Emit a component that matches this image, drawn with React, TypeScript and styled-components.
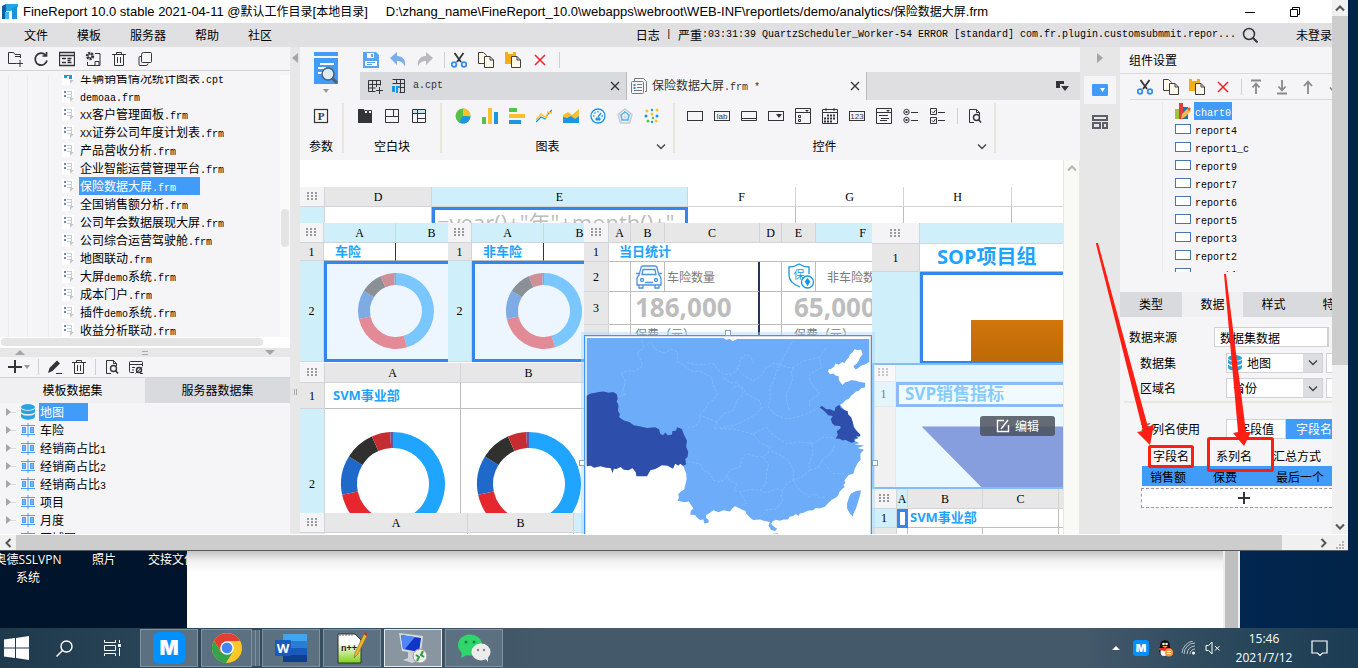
import React from 'react';
import styled, { createGlobalStyle, css } from 'styled-components';

const CJK = '"Noto Sans CJK SC", "Noto Sans", sans-serif';
const BLUE = '#419bf9';
const INK = '#333438';

const GlobalStyle = createGlobalStyle`
  * { box-sizing: border-box; }
  body { margin: 0; background: #001a3c; font: 12px/18px ${CJK}; color: #000; }
  button, input, select { font: inherit; color: inherit; }
  ul { list-style: none; margin: 0; padding: 0; }
  h1, h2, p { margin: 0; font: inherit; }
  svg { display: block; flex: none; }
`;

/* ---------- text ---------- */

const Ascii = styled.span<{ $ui?: boolean }>`
  font-family: ${p => (p.$ui ? '"Liberation Sans", sans-serif' : '"Liberation Mono", monospace')};
  font-size: ${p => (p.$ui ? 13 : 10)}px;
  font-weight: ${p => (p.$ui ? 400 : 500)};
  white-space: pre;
`;

const Mixed = ({ text, ui }: { text: string; ui?: boolean }) => (
  <>
    {text.split(/([\x20-\x7e]+)/).filter(Boolean).map((part, i) =>
      /^[\x20-\x7e]/.test(part) ? <Ascii key={i} $ui={ui}>{part}</Ascii> : part
    )}
  </>
);

/* ---------- page shell ---------- */

const Desktop = styled.div`
  display: flex;
  flex-direction: column;
  min-height: 100vh;
  min-width: 1200px;
  overflow: hidden;
  background: linear-gradient(90deg, #00142b 0, #001833 60%, #01264f 92%, #012447 100%);
`;

const RemoteWindow = styled.main`
  position: relative;
  flex: 1;
  display: grid;
  grid-template-columns: minmax(0, 1fr) 16px;
  grid-template-rows: minmax(0, 1fr) 16px;
  margin-right: 10px;
  background: #f0f0f0;
  border-bottom: 1px solid #565a5e;
  z-index: 1;
`;

const Designer = styled.div`
  display: flex;
  flex-direction: column;
  height: calc(100vh - 134px);
  min-height: 534px;
  min-width: 0;
  overflow: hidden;
  background: #f5f5f7;
`;

const ScrollColumn = styled.div`
  display: flex;
  flex-direction: column;
  background: #f0f0f0;
`;

const ScrollRow = styled.div`
  grid-column: 1 / 3;
  display: flex;
  background: #f0f0f0;
  border-top: 1px solid #fff;
`;

const ScrollEnd = styled.button`
  display: grid;
  place-items: center;
  flex: none;
  width: 16px;
  height: 16px;
  padding: 0;
  border: 0;
  background: none;
`;

const Thumb = styled.div<{ $grow: number }>`
  flex: ${p => p.$grow} 0 0;
  background: #cdcdcd;
`;

const Rest = styled.div<{ $grow: number }>`
  flex: ${p => p.$grow} 0 0;
`;

const TitleBar = styled.header`
  display: flex;
  align-items: center;
  gap: 5px;
  height: 23px;
  flex: none;
  padding-left: 1px;
  background: #fff;
  white-space: pre;
`;

const Title = styled.h1`
  display: flex;
  gap: 18px;
`;

const WindowButtons = styled.div`
  display: flex;
  gap: 29px;
  margin-left: auto;
  padding-right: 29px;
`;

const MenuBar = styled.nav`
  display: flex;
  align-items: center;
  flex: none;
  height: 24px;
  padding-left: 24px;
  background: #e0e0e2;
`;

const MenuItem = styled.button`
  padding: 0;
  margin-right: 29px;
  border: 0;
  background: none;
`;

const LogLine = styled.div`
  display: flex;
  align-items: center;
  margin-left: auto;
  white-space: nowrap;
`;

const Login = styled.button`
  padding: 0;
  margin-left: 38px;
  border: 0;
  background: none;
`;

const Workspace = styled.div`
  display: flex;
  flex: 1;
  min-height: 0;
`;

/* ---------- shared controls ---------- */

const IconButton = styled.button`
  display: grid;
  place-items: center;
  flex: none;
  width: 16px;
  height: 16px;
  padding: 0;
  border: 0;
  background: none;
`;

const Toolbar = styled.div<{ $h: number; $gap: number; $pad: number }>`
  display: flex;
  align-items: center;
  flex: none;
  height: ${p => p.$h}px;
  gap: ${p => p.$gap}px;
  padding-left: ${p => p.$pad}px;
`;

const Divider = styled.span`
  flex: none;
  width: 1px;
  height: 16px;
  background: #d0d0d4;
`;

type IconProps = { children: React.ReactNode; size?: number; w?: number; stroke?: string };
const Icon = ({ children, size = 16, w = 16, stroke = INK }: IconProps) => (
  <svg width={w} height={size} viewBox={`0 0 ${w} ${size}`} fill="none" stroke={stroke} strokeWidth="1">
    {children}
  </svg>
);

const Tool = ({ label, children }: { label: string; children: React.ReactNode }) => (
  <IconButton type="button" aria-label={label}><Icon>{children}</Icon></IconButton>
);

const cutArt = (
  <g>
    <path d="M3.500 1 10 10M12.500 1 6 10" stroke={INK} strokeWidth="1.800" />
    <circle cx="3" cy="12.500" r="2.300" stroke="#2f8df5" strokeWidth="1.800" />
    <circle cx="13" cy="12.500" r="2.300" stroke="#2f8df5" strokeWidth="1.800" />
  </g>
);
const copyArt = (
  <g fill="#fff9ea" stroke="#3f3f42">
    <path d="M.5.5h5l3 3v8h-8z" />
    <path d="M6.500 4.500h5.500l3.500 3.500v7.500h-9zM12 4.500v3.500h3.500" />
  </g>
);
const pasteArt = (
  <g>
    <path d="M0 0h11v12H0z" fill="#f2ae17" stroke="none" />
    <path d="M3 0h5v2H3z" fill="#fff3d0" stroke="none" />
    <path d="M6.500 4.500h5.500l3.500 3.500v7.500h-9zM12 4.500v3.500h3.500" fill="#fff9ea" stroke="#3f3f42" />
  </g>
);
const removeArt = <path d="M3 3l10 10M13 3 3 13" stroke="#e8232b" strokeWidth="1.500" />;
const trashArt = <path d="M1 3.500h14M5.500 3.500v-2h5v2M3.500 3.500v11h9v-11M6.500 6v6M9.500 6v6" />;
const pageFindArt = (
  <g>
    <path d="M7 14.500H2.500v-13h7l3 3V7M9.500 1.500v3h3" />
    <circle cx="9.500" cy="9.500" r="3" strokeWidth="1.400" />
    <path d="M11.500 11.500 14 14.500" strokeWidth="1.600" />
  </g>
);
const chevronArt = <path d="M1 1.500 5 5.500 9 1.500" stroke="#444" strokeWidth="1.400" />;
const databaseArt = (
  <g fill="#2ca3e0" stroke="none">
    <ellipse cx="8" cy="3" rx="7" ry="3" />
    <path d="M1 4.500c2 3 12 3 14 0v3.500c-2 3-12 3-14 0zM1 9.500c2 3 12 3 14 0v3.500c-2 3.500-12 3.500-14 0z" />
  </g>
);

/* ---------- left panel ---------- */

const LeftPanel = styled.aside`
  display: flex;
  flex-direction: column;
  flex: none;
  width: 290px;
`;

const Gutter = styled.div`
  display: flex;
  flex-direction: column;
  justify-content: space-between;
  align-items: center;
  flex: none;
  width: 10px;
  padding: 6px 0 139px;
  background: #e7e7e8;
`;

const GripBars = styled.span`
  width: 3px;
  height: 6px;
  border: solid #aaa;
  border-width: 0 1px;
`;

const TreeArea = styled.div`
  display: flex;
  flex: 262 0 0;
  min-height: 0;
  margin-top: 4px;
`;

const TreeClip = styled.div`
  flex: 1;
  overflow: hidden;
  background:
    linear-gradient(#ececee, #ececee) 8px 0 / 1px 100% no-repeat,
    linear-gradient(#ececee, #ececee) 27px 0 / 1px 100% no-repeat,
    linear-gradient(#ececee, #ececee) 48px 0 / 1px 100% no-repeat;
`;

const FileTree = styled.ul`
  margin-top: -6px;
`;

const FileRow = styled.li`
  display: flex;
  align-items: center;
  height: 18px;
  padding-left: 62px;
  gap: 5px;
  white-space: nowrap;
`;

const Label = styled.span<{ $on?: boolean; $w?: number }>`
  height: 18px;
  padding: 0 1px;
  min-width: ${p => (p.$w ? p.$w + 'px' : 'auto')};
  ${p => p.$on && css`background: ${BLUE}; color: #fff;`}
`;

const SideScroll = styled.div`
  display: flex;
  flex-direction: column;
  width: 10px;
  padding: 0 1px;
  background: #fafafa;
`;

const SoftThumb = styled.div<{ $grow: number }>`
  flex: ${p => p.$grow} 0 0;
  border-radius: 4px;
  background: #e4e4e5;
`;

const BottomScroll = styled.div`
  display: flex;
  flex: none;
  height: 11px;
  padding: 1px 1px 2px;
  background: #fff;
`;

const Splitter = styled.div`
  display: flex;
  align-items: center;
  justify-content: space-between;
  flex: none;
  height: 9px;
  padding: 0 15px;
  background: #e7e7e8;
`;

const Tabs = styled.div`
  display: flex;
  flex: none;
  height: 25px;
`;

const Tab = styled.button<{ $on?: boolean; $w?: number }>`
  flex: ${p => (p.$w ? `0 0 ${p.$w}px` : '1')};
  padding: 0 0 1px;
  border: 0;
  overflow: hidden;
  background: ${p => (p.$on ? '#f0f0f2' : '#d9dadd')};
`;

const DataTree = styled.ul`
  flex: 131 0 0;
  min-height: 0;
  overflow: hidden;
`;

const DataRow = styled.li`
  display: flex;
  align-items: center;
  height: 18px;
  padding-left: 6px;
  & > ${Label} { margin-left: 3px; }
`;

const FileGlyph = ({ cpt }: { cpt?: boolean }) => (
  <Icon w={12} size={14} stroke="none">
    <path d="M0 0h12v9l-5 5H0z" fill="#fff" />
    <path d="M12 9 8 13V9z" fill="#c8c8cb" />
    {cpt
      ? <path d="M2 2h3v5H2zM6 2h4v6H7V5H5V4h1z" fill="#1b9be3" />
      : <><path d="M2 2h2v2H2zM2 6h2v2H2z" fill="#7287ad" /><path d="M5 2.500h5M5 5.500h5M5 8.500h4M9.500 2v7" stroke="#c9ced6" /></>}
  </Icon>
);

const tableArt = (
  <g stroke="#4a9cf5">
    <path d="M1 3.500h14M1 12.500h14M8 1v14" />
    <rect x="2.500" y="5.500" width="3" height="5" fill="#8fc0f8" />
    <rect x="10.500" y="5.500" width="3" height="5" fill="#8fc0f8" />
    <path d="M2 8h4M10 8h4" />
  </g>
);

const files = [
  '车辆销售情况统计图表.cpt', 'demoaa.frm', 'XX客户管理面板.frm', 'XX证券公司年度计划表.frm', '产品营收分析.frm',
  '企业智能运营管理平台.frm', '保险数据大屏.frm', '全国销售额分析.frm', '公司年会数据展现大屏.frm', '公司综合运营驾驶舱.frm',
  '地图联动.frm', '大屏demo系统.frm', '成本门户.frm', '插件demo系统.frm', '收益分析联动.frm',
];
const datasets = ['地图', '车险', '经销商占比1', '经销商占比2', '经销商占比3', '项目', '月度', '区域图'];

const LineUnder = styled.div`
  flex: none;
  border-bottom: 1px solid #d4d4d7;
`;

const LeftSide = () => (
  <LeftPanel>
    <LineUnder>
      <Toolbar $h={23} $gap={10} $pad={7}>
        <Tool label="新建文件夹"><path d="M13.500 7V3.500H8L6.500 1.500H1.500v11h8M13 9v7M9.500 12.500h7M8 5.500h5" /></Tool>
        <Tool label="刷新"><path d="M12.500 4A6 6 0 1 0 14 9.500M13.500 1v4h-4" strokeWidth="1.700" /></Tool>
        <Tool label="目录"><path d="M.5 1.500h15v13H.5zM.5 4.500h15M3 7.500h4M3 11.500h4M8.500 7.500h4M8.500 9.500h3M8.500 11.500h4" strokeWidth="1.300" /></Tool>
        <Tool label="设置"><circle cx="5" cy="5" r="3" strokeWidth="2.400" strokeDasharray="2 1" /><circle cx="5" cy="5" r="2" /><path d="M10 2.500h5v12H2.500V11M10 10.500h4v4h-4z" /></Tool>
        <Tool label="删除">{trashArt}</Tool>
        <Tool label="切换"><path d="M4.500 5.500H3q-1 0-1 1v7q0 1 1 1h6q2 0 2-2M6.500 1.500h7q1 0 1 1v8q0 1-1 1h-8q-1 0-1-1v-7q0-2 2-2z" /></Tool>
      </Toolbar>
    </LineUnder>
    <TreeArea>
      <TreeClip>
        <FileTree>
          {files.map((f, i) => (
            <FileRow key={f}>
              <FileGlyph cpt={i === 0} />
              <Label $on={i === 6} $w={i === 6 ? 121 : undefined}><Mixed text={f} /></Label>
            </FileRow>
          ))}
        </FileTree>
      </TreeClip>
      <SideScroll><Rest $grow={134} /><SoftThumb $grow={38} /><Rest $grow={90} /></SideScroll>
    </TreeArea>
    <BottomScroll><SoftThumb $grow={262} /><Rest $grow={26} /></BottomScroll>
    <Splitter>
      <Icon w={10} size={5} stroke="none"><path d="M0 5 5 0l5 5z" fill="#a5a5a8" /></Icon>
      <Icon w={6} size={4} stroke="#aaa"><path d="M0 .5h6M0 3.500h6" /></Icon>
      <Icon w={10} size={5} stroke="none"><path d="M0 0l5 5 5-5z" fill="#a5a5a8" /></Icon>
    </Splitter>
    <LineUnder>
      <Toolbar $h={20} $gap={8} $pad={7}>
        <Toolbar $h={20} $gap={1} $pad={0}>
          <Tool label="添加数据集"><path d="M8 1v13M1 8h14" strokeWidth="2" /></Tool>
          <Icon w={6} size={4} stroke="none"><path d="M0 0h6L3 4z" fill="#999" /></Icon>
        </Toolbar>
        <Divider />
        <Tool label="编辑"><path d="M1 14l1.500-5L10 1.500l3 3L5.500 12z" fill={INK} stroke="none" /><path d="M9 14.500h6" /></Tool>
        <Tool label="删除">{trashArt}</Tool>
        <Divider />
        <Tool label="预览">{pageFindArt}</Tool>
        <Tool label="连接"><path d="M6 13.500H2.500q-1 0-1-1v-9q0-1 1-1h11q1 0 1 1V7M1.500 5.500h13M4 8.500h3M4 11h2" /><circle cx="11" cy="11" r="2.500" strokeWidth="1.500" /><path d="M7.500 14.500 14.500 8M12 14.500h3" /></Tool>
      </Toolbar>
    </LineUnder>
    <Tabs role="tablist">
      <Tab type="button" role="tab" $on>模板数据集</Tab>
      <Tab type="button" role="tab">服务器数据集</Tab>
    </Tabs>
    <DataTree>
      {datasets.map((d, i) => (
        <DataRow key={d}>
          <Icon w={14} size={8} stroke="#dcdcde"><path d="M5 4.500h5" /><path d="M0 0l5 4-5 4z" fill="#a5a5a8" stroke="none" /></Icon>
          <Icon>{i === 0 ? databaseArt : tableArt}</Icon>
          <Label $on={i === 0} $w={i === 0 ? 49 : undefined}><Mixed text={d} /></Label>
        </DataRow>
      ))}
    </DataTree>
  </LeftPanel>
);

/* ---------- top ribbon ---------- */

const Center = styled.section`
  display: flex;
  flex-direction: column;
  flex: 1;
  min-width: 0;
`;

const Head = styled.div`
  display: flex;
  flex: none;
`;

const PreviewButton = styled.button`
  flex: none;
  display: grid;
  justify-items: center;
  align-content: start;
  gap: 5px;
  width: 52px;
  padding: 5px 0 0;
  border: 0;
  background: none;
`;

const HeadRight = styled.div`
  flex: 1;
  min-width: 0;
`;

const DocTabs = styled.div`
  display: flex;
  height: 28px;
  margin-left: 8px;
  background: #dfdfe1;
`;

const DocTab = styled.div<{ $on?: boolean; $w: number }>`
  display: flex;
  align-items: center;
  flex: 0 0 ${p => p.$w}px;
  gap: ${p => (p.$on ? 5 : 7)}px;
  padding: 0 3px 0 ${p => (p.$on ? 4 : 7)}px;
  border-right: 1px solid #b9babe;
  background: ${p => (p.$on ? '#f5f5f7' : '#d9dade')};
  color: #333;
  & > :last-child { margin-left: auto; }
`;

const Ribbon = styled.div`
  display: flex;
  align-items: flex-start;
  flex: none;
  height: 60px;
  padding-top: 3px;
`;

const Group = styled.div<{ $w: number }>`
  display: grid;
  grid-template-rows: 26px 24px;
  align-items: center;
  width: ${p => p.$w}px;
  border-right: 2px solid #e9e7dc;
`;

const GroupIcons = styled.div`
  display: flex;
  justify-content: center;
  gap: 11px;
`;

const GroupName = styled.div<{ $more?: boolean }>`
  display: grid;
  grid-template-columns: 1fr ${p => (p.$more ? '16px' : '')};
  justify-items: center;
  padding: 10px ${p => (p.$more ? 4 : 0)}px 0 0;
  & > button { height: 18px; }
`;

const chartArts: [string, React.ReactNode][] = [
  ['饼图', <g stroke="none"><circle cx="8" cy="8" r="7.500" fill="#55c24e" /><path d="M8 8V.5a7.500 7.500 0 0 1 7.400 8z" fill="#fdbf2d" /><path d="M8 8l7.400.5A7.500 7.500 0 0 1 4 14.500z" fill="#1a96e3" /></g>],
  ['柱形图', <g stroke="none"><path d="M0 9h4v7H0z" fill="#55c24e" /><path d="M6 0h4v16H6z" fill="#fdbf2d" /><path d="M12 4h4v12h-4z" fill="#1a96e3" /></g>],
  ['条形图', <g stroke="none"><path d="M0 0h8v4H0z" fill="#55c24e" /><path d="M0 6h16v4H0z" fill="#fdbf2d" /><path d="M0 12h12v4H0z" fill="#1a96e3" /></g>],
  ['折线图', <g strokeWidth="1.300"><path d="M0 14l5-5 4 2 3-5 4-4" stroke="#1a96e3" /><path d="M0 12l5-6 5 4 2-6 4 1" stroke="#fdbf2d" /></g>],
  ['面积图', <g stroke="none"><path d="M0 7l5-3 4 3 7-6v14H0z" fill="#fdbf2d" /><path d="M0 9l4 1 4-2 4 3 4-3v7H0z" fill="#1a96e3" /></g>],
  ['仪表盘', <g stroke="#1a96e3"><circle cx="8" cy="8" r="7" strokeWidth="1.300" /><path d="M3 8h1.500M8 3v1.500M11.500 8H13M4.500 4.500l1 1M8 9l3-4" strokeWidth="1.300" /><path d="M6 12h4v-2H6z" fill="#1a96e3" /></g>],
  ['雷达图', <g><path d="M8 1l7 5.500-2.500 8.500h-9L1 6.500z" stroke="#c2ccd3" strokeWidth="1.500" /><path d="M8 1v8l-5 6M8 9l5 6M1 6l7 3 7-3" stroke="#cdd9e2" /><path d="M8 4l4 3-1 5H5L4 7z" stroke="#58b2ee" strokeWidth="1.500" /></g>],
  ['散点图', <g stroke="none"><g fill="#fdbf2d"><circle cx="3" cy="3" r="1.500" /><circle cx="13" cy="2" r="1.500" /><circle cx="8" cy="6" r="1.500" /><circle cx="12" cy="13" r="1.500" /></g><g fill="#1a96e3"><circle cx="8" cy="2" r="1.200" /><circle cx="2" cy="8" r="1.500" /><circle cx="13" cy="8" r="1.500" /><circle cx="8" cy="14" r="1.200" /></g><g fill="#55c24e"><circle cx="4" cy="13" r="1.500" /><circle cx="9" cy="10" r="1.200" /></g></g>],
];

const glyph = (t: string) => <text x="8" y="11" fontSize="8" fontFamily="Liberation Sans" textAnchor="middle" fill={INK} stroke="none">{t}</text>;
const controlArts: [string, React.ReactNode][] = [
  ['按钮', <rect x=".5" y="3.500" width="15" height="9" />],
  ['标签', <><rect x=".5" y="3.500" width="15" height="9" />{glyph('lab')}</>],
  ['文本', <path d="M.5 10V3.500h15V10M0 10.500h16M.5 10v2.500h15V10" />],
  ['下拉框', <><rect x=".5" y="3.500" width="15" height="9" /><path d="M8 6h6l-3 4z" fill={INK} stroke="none" /></>],
  ['下拉树', <><path d="M.5.5h15v15H.5zM.5 4.500h15M3.500 7.500h2v2h-2zM3.500 11.500h2v2h-2z" /><path d="M10 2h4l-2 2z" fill={INK} stroke="none" /></>],
  ['日期', <><path d="M.5 1.500h15v14H.5zM.5 4.500h15M4 0v3M12 0v3" /><path d="M5 7.500h8M2 10.500h11M2 13.500h8" strokeDasharray="2 1" strokeWidth="2" /></>],
  ['数字', <><rect x=".5" y="3.500" width="15" height="9" />{glyph('123')}</>],
  ['列表', <><path d="M.5.5h15v15H.5zM.5 4.500h15M3 7.500h9M5 10.500h8M4 12.500h7" /><path d="M10 2h4l-2 2z" fill={INK} stroke="none" /></>],
  ['单选按钮组', <><circle cx="3.500" cy="4" r="2.700" /><circle cx="3.500" cy="12" r="2.700" /><path d="M2.500 4h2M2.500 12h2" strokeWidth="2" /><path d="M8 4.500h7M8 12.500h7" /></>],
  ['复选按钮组', <path d="M.5.500h6v6h-6zM.5 9.500h6v6h-6zM2 3.500l1.500 1.500 2-3M2 12.500 3.500 14l2-3M8 4.500h7M8 12.500h7" />],
];

const EditorHead = () => (
  <>
    <Head>
      <PreviewButton type="button" aria-label="预览模板">
        <svg width="24" height="32" viewBox="0 0 24 32">
          <path d="M0 0h24v4H0zM0 6h24v26H0z" fill="#419bf9" />
          <path d="M6 12h14M4 16h8M4 21h6" stroke="#fff" strokeWidth="2" />
          <circle cx="14" cy="22" r="6" fill="#dcebf5" stroke="#51606c" strokeWidth="1.500" />
          <path d="M18 26l5 5" stroke="#51606c" strokeWidth="3" />
        </svg>
        <Icon w={6} size={4} stroke="none"><path d="M0 0h6L3 4z" fill="#999" /></Icon>
      </PreviewButton>
      <HeadRight>
        <Toolbar $h={25} $gap={11} $pad={11}>
          <Tool label="保存"><path d="M0 0h13l3 3v13H0z" fill="#5ba3ee" stroke="none" /><path d="M4 1h7v5H4z" fill="#fff" stroke="none" /><path d="M8 2h2v3H8z" fill="#5ba3ee" stroke="none" /><path d="M2 9h12v5H2z" fill="#fff" stroke="none" /><path d="M4 10.500h8M4 12.500h5" stroke="#5ba3ee" /></Tool>
          <Tool label="撤销"><path d="M0 6 7 0v4c6 0 9 4 8 11-1-4-4-6-8-6v4z" fill="#78aeea" stroke="none" /></Tool>
          <Tool label="重做"><path d="M16 6 9 0v4C3 4 0 8 1 15c1-4 4-6 8-6v4z" fill="#b9babd" stroke="none" /></Tool>
          <Toolbar $h={16} $gap={6} $pad={0}><Divider /><Tool label="剪切">{cutArt}</Tool></Toolbar>
          <Tool label="复制">{copyArt}</Tool>
          <Tool label="粘贴">{pasteArt}</Tool>
          <Tool label="删除">{removeArt}</Tool>
          <Divider />
        </Toolbar>
        <DocTabs role="tablist">
          <DocTab $w={267}>
            <Tool label="新建"><path d="M1.500 2.500h12v5M1.500 2.500v11h7M1.500 6.500h12M1.500 10h7M5.500 2.500v11M9.500 2.500V9M12.500 9v7M9 12.500h7" /></Tool>
            <Icon><path d="M2.500 1.500h12v13h-5M2.500 5.500h12M6.500 1.500v4M10.500 1.500v13M14 9.500h-4" /><path d="M2 8h3v6H2zM6 8h4v2H8v5H6z" fill="#1a96e3" stroke="none" /></Icon>
            <Ascii>a.cpt</Ascii>
            <Tool label="关闭 a.cpt"><path d="M4 4l8 8M12 4l-8 8" strokeWidth="1.300" /></Tool>
          </DocTab>
          <DocTab $w={240} $on>
            <Icon stroke="#77797f"><path d="M3.500 3V.5h9l3 3v10H14" /><rect x=".5" y="3.500" width="12" height="12" rx="1" /><path d="M6 6.500h5M6 9.500h5M3 12.500h8" /><path d="M2.500 6h2v2h-2zM2.500 9h2v2h-2z" fill="#1a96e3" stroke="none" /></Icon>
            <span><Mixed text="保险数据大屏.frm *" /></span>
            <Tool label="关闭 保险数据大屏.frm"><path d="M4 4l8 8M12 4l-8 8" strokeWidth="1.300" /></Tool>
          </DocTab>
          <Toolbar $h={28} $gap={0} $pad={188}>
            <Tool label="全部文档"><path d="M1 3h8v3H5v4H1z" fill={INK} stroke="none" /><path d="M6 8h8l-4 5z" fill={INK} stroke="none" /></Tool>
          </Toolbar>
        </DocTabs>
      </HeadRight>
    </Head>
    <Ribbon>
      <Group $w={44}>
        <GroupIcons><Tool label="参数"><rect x="1.500" y="1.500" width="13" height="13" strokeWidth="1.200" /><text x="8" y="12" fontSize="11" fontWeight="700" fontFamily="Liberation Serif" textAnchor="middle" fill={INK} stroke="none">P</text></Tool></GroupIcons>
        <GroupName><span>参数</span></GroupName>
      </Group>
      <Group $w={98}>
        <GroupIcons>
          <Tool label="tab块"><path d="M1 1h6v4h8v10H1z" fill={INK} stroke="none" /><path d="M7.500 2.500h3v3h-3zM11.500 2.500h3v3h-3z" /></Tool>
          <Tool label="绝对画布块"><path d="M1.500 1.500h13v13h-13zM1.500 8.500h13M9.500 1.500v7" /></Tool>
          <Tool label="报表块"><path d="M2 2h12v3H2z" fill="#bde6f7" stroke="none" /><path d="M1.500 1.500h13v13h-13zM1.500 5.500h13M6.500 1.500v13M6.500 10.500h8" /></Tool>
        </GroupIcons>
        <GroupName><span>空白块</span></GroupName>
      </Group>
      <Group $w={233}>
        <GroupIcons>{chartArts.map(([n, a]) => <Tool key={n} label={n}>{a}</Tool>)}</GroupIcons>
        <GroupName $more><span>图表</span><IconButton type="button" aria-label="更多图表"><Icon w={10} size={7}>{chevronArt}</Icon></IconButton></GroupName>
      </Group>
      <Group $w={321}>
        <GroupIcons>
          {controlArts.map(([n, a]) => <Tool key={n} label={n}>{a}</Tool>)}
          <Toolbar $h={16} $gap={9} $pad={0}><Divider /><Tool label="查询">{pageFindArt}</Tool></Toolbar>
        </GroupIcons>
        <GroupName $more><span>控件</span><IconButton type="button" aria-label="更多控件"><Icon w={10} size={7}>{chevronArt}</Icon></IconButton></GroupName>
      </Group>
    </Ribbon>
  </>
);

/* ---------- design canvas ---------- */

const CanvasRow = styled.div`
  display: flex;
  flex: 1;
  min-height: 0;
`;

const Canvas = styled.div`
  position: relative;
  flex: 1;
  overflow: hidden;
  background: #fff;
`;

const CanvasScroll = styled.div`
  flex: none;
  width: 17px;
  border: solid #e9e7e0;
  border-width: 0 1px;
  background: #f9f9f6;
`;

const Block = styled.div<{ $x: number; $y: number; $w?: number; $h?: number }>`
  position: absolute;
  left: ${p => p.$x}px;
  top: ${p => p.$y}px;
  ${p => (p.$w ? `width: ${p.$w}px;` : 'right: 0;')}
  ${p => (p.$h ? `height: ${p.$h}px;` : 'bottom: 0;')}
  overflow: hidden;
  background: #fff;
`;

const Grid = styled.table<{ $cols: string; $rows: string; $tint?: boolean }>`
  display: grid;
  grid-template-columns: ${p => p.$cols};
  grid-template-rows: ${p => p.$rows};
  width: 100%;
  font-family: "Liberation Serif", serif;
  thead, tbody, tr { display: contents; }
  ${p => p.$tint && css`background: #eaf7fe; opacity: 0.55;`}
`;

const HeadCell = styled.th<{ $hot?: boolean; $plain?: boolean }>`
  display: grid;
  place-items: center;
  padding: 0;
  overflow: hidden;
  font-weight: 500;
  border: solid #d3d4d8;
  border-width: 0 1px 1px 0;
  background: ${p => (p.$hot ? '#cff0fb' : p.$plain ? '#fff' : '#e7e7e7')};
`;

const Corner = styled(HeadCell)`
  background: #f4f4f7;
`;

const Cell = styled.td<{ $span?: number; $pad?: number; $line?: string; $thick?: boolean; $sel?: boolean; $fill?: string }>`
  grid-column: span ${p => p.$span || 1};
  min-width: 0;
  padding: 0 0 0 ${p => p.$pad || 0}px;
  overflow: hidden;
  white-space: nowrap;
  border: solid #bdbdbd;
  border-width: 0 ${p => (p.$thick ? 2 : 1)}px 1px 0;
  ${p => p.$line && css`border-right-color: ${p.$line};`}
  background: ${p => p.$fill || '#fff'};
  ${p => p.$sel && css`border: 3px solid #3385f0;`}
`;

const CellTitle = styled.div<{ $size: number; $lh: number }>`
  color: #1ea3ff;
  font: 700 ${p => p.$size}px/${p => p.$lh}px "Open Sans", ${CJK};
`;

const Figure = styled.div`
  color: #bdbdbd;
  font: 700 26px/30px "Open Sans", ${CJK};
`;

const Formula = styled.div`
  color: #bdbdbd;
  font: 22px/24px "Open Sans", ${CJK};
`;

const Caption = styled.div<{ $lh: number }>`
  color: #7a7a7a;
  font: 12px/${p => p.$lh}px ${CJK};
`;

const Dots = () => (
  <svg width="11" height="9" viewBox="0 0 11 9" fill="#9a9a9c">
    {[0, 4, 8].map(x => [0, 3, 6].map(y => <rect key={`${x}-${y}`} x={x} y={y} width="2" height="2" />))}
  </svg>
);

type ColHead = [string, boolean?, boolean?];
type Row = { n: string; hot?: boolean; cells: React.ReactNode };
const Sheet = ({ cols, rows, heads, body, tint }: { cols: string; rows: string; heads: ColHead[]; body: Row[]; tint?: boolean }) => (
  <Grid $cols={cols} $rows={rows} $tint={tint}>
    <thead>
      <tr>
        <Corner><Dots /></Corner>
        {heads.map(([t, hot, plain], i) => <HeadCell key={i} scope="col" $hot={hot} $plain={plain}>{t}</HeadCell>)}
      </tr>
    </thead>
    <tbody>
      {body.map((r, i) => <tr key={i}><HeadCell scope="row" $hot={r.hot}>{r.n}</HeadCell>{r.cells}</tr>)}
    </tbody>
  </Grid>
);

const pt = (r: number, deg: number) => {
  const a = (deg * Math.PI) / 180;
  return `${(r * Math.sin(a)).toFixed(2)} ${(-r * Math.cos(a)).toFixed(2)}`;
};
const stops = [0, 163, 258, 302, 336, 357, 360];
const Donut = ({ w, h, cx, cy, outer, inner, colors }: { w: number; h: number; cx: number; cy: number; outer: number; inner: number; colors: string[] }) => (
  <svg width={w} height={h}>
    <g transform={`translate(${cx} ${cy})`}>
      {colors.map((c, i) => {
        const [a, b] = [stops[i], stops[i + 1]];
        return <path key={i} fill={c} d={`M${pt(outer, a)}A${outer} ${outer} 0 0 1 ${pt(outer, b)}L${pt(inner, b)}A${inner} ${inner} 0 0 0 ${pt(inner, a)}Z`} />;
      })}
    </g>
  </svg>
);
const soft = ['#7ac7ff', '#e28b97', '#7eabe3', '#8a9096', '#cd8f98', '#a79cc8'];
const vivid = ['#1fa4ff', '#e6282e', '#1f69cb', '#30302f', '#c52d32', '#5c5aa9'];

const NAVY = '#233556';
const RingSheet = ({ title }: { title: string }) => (
  <Sheet
    cols="24px 72px 72px" rows="20px 18px 101px"
    heads={[['A', true], ['B', true]]}
    body={[
      { n: '1', cells: <><Cell $pad={11} $line={NAVY}><CellTitle $size={13} $lh={17}>{title}</CellTitle></Cell><Cell $line={NAVY} /></> },
      { n: '2', hot: true, cells: <Cell $span={2} $sel $fill="#edf6fe"><Donut w={138} h={95} cx={69} cy={47} outer={38} inner={26} colors={soft} /></Cell> },
    ]}
  />
);

const MapFrame = styled.div`
  position: absolute;
  left: 284px;
  top: 175px;
  bottom: -4px;
  width: 288px;
  padding: 1px;
  border: 1px solid #3f93f3;
  background: #d8dce2;
  box-shadow: 0 0 0 3px rgba(170, 215, 255, 0.45);
  svg { background: #fff; border-top: 1px solid #fff; }
`;

const Handle = styled.span<{ $x: number; $y: number }>`
  position: absolute;
  left: ${p => p.$x}px;
  top: ${p => p.$y}px;
  width: 6px;
  height: 6px;
  border: 1px solid #7da5cf;
  background: #fff;
`;

const EditButton = styled.button`
  position: absolute;
  left: 680px;
  top: 256px;
  display: flex;
  align-items: center;
  justify-content: center;
  gap: 5px;
  width: 75px;
  height: 20px;
  padding: 0;
  border: 0;
  border-radius: 3px;
  background: rgba(75, 80, 90, 0.84);
  color: #fff;
`;

const Veil = styled.div`
  position: absolute;
  inset: 0;
  border: solid #84bcf9;
  border-width: 2px 0 2px 2px;
`;

const OrangeBar = styled.div`
  height: 44px;
  margin: 45px 0 0 48px;
  background: linear-gradient(#d0760b, #bd6908);
`;

const ChinaMap = () => (
  <svg width="284" height="200" viewBox="18 471 852 600">
    <path fill="#6cacf9" d="M18 471H430L438 476 450 474 458 481 472 474H870V543L858 550 845 555 836 562 828 566 822 556 832 548 838 540 842 530 850 520 845 506 836 508 825 505 820 514 812 520 808 530 800 538 796 546 788 543 778 552 768 548 765 556 756 564 747 565 746 573 752 580 762 578 768 584 778 586 778 598 784 606 790 613 798 604 806 603 816 598 830 600 842 604 858 606 857 620 846 622 838 630 830 632 822 640 815 645 808 655 800 657 790 668 782 672 795 688 815 710 825 740 843 765 825 780 840 788 826 792 855 795 835 803 854 808 843 820 844 838 836 846 830 858 826 866 822 880 808 884 795 900 798 908 792 914 796 920 788 926 780 935 776 946 770 952 758 958 745 970 736 980 720 985 710 983 700 990 684 992 672 998 660 1000 658 1008 648 1002 640 1008 630 1010 625 1018 612 1018 600 1022 588 1019 578 1024 574 1032 580 1038 592 1046 586 1053 574 1050 566 1036 570 1026 552 1022 540 1018 520 1020 508 1010 500 1002 496 992 490 990 480 985 465 978 456 986 450 994 430 990 415 996 400 990 390 998 378 1005 378 1014 386 1020 385 1028 372 1030 370 1018 360 1020 350 1012 345 1005 330 1004 332 992 340 985 332 974 326 964 312 966 292 962 296 952 294 942 302 934 312 928 315 915 319 898 318 880 312 864 305 850 18 850Z" />
    <path fill="#6cacf9" d="M845 930 842 945 836 966 830 985 824 996 820 1010 810 998 803 985 803 970 806 960 810 948 815 940 830 932ZM560 1064 592 1060 600 1064 592 1071 560 1071Z" />
    <path fill="#2d4eaa" d="M18 645 30 638 40 637 54 634 70 632 84 636 98 634 108 640 112 652 108 662 114 674 112 690 118 700 116 710 130 720 146 724 160 734 180 738 200 742 225 740 236 746 240 760 248 764 255 756 262 764 275 762 276 752 288 750 290 740 305 745 310 760 320 780 318 800 324 815 322 830 315 836 318 852 308 856 300 850 294 856 285 850 278 865 262 856 245 855 225 866 210 870 200 888 168 888 166 876 156 864 144 870 130 868 120 860 108 866 100 865 96 878 90 863 76 862 60 858 40 862 30 856 18 858Z" />
    <path fill="#2d4eaa" d="M720 680 728 676 740 686 752 686 765 692 768 680 780 672 784 682 795 688 805 692 806 702 815 710 820 724 823 740 830 750 843 762 842 768 830 766 836 774 824 774 826 784 816 787 808 783 798 778 790 780 780 775 768 774 775 764 772 752 784 742 782 736 765 735 758 728 754 716 760 706 746 704 735 692Z" />
    <g fill="none" stroke="#8dc0fb" strokeWidth="2" strokeDasharray="9 4">
      <path d="M185 478 190 500 170 518 182 540 186 556 160 572 142 568 122 578 135 600 130 622 122 640 138 640 110 650M200 490 210 482 230 510 256 516 270 505 292 512 290 540 312 554 330 570 362 572 395 590 398 610 412 640 400 658 385 665 376 684 360 700 358 722 346 738 322 740" />
      <path d="M320 545 350 552 400 548 414 566 430 580 452 582 470 570 480 550 480 535 500 520 514 530 520 545M430 590 450 606 470 605 484 620 490 640 470 662 460 690 430 700 412 724 350 700M412 724 400 745 430 740 460 735 490 722 530 700 545 682 540 660 520 650 500 640 490 622 470 615 455 625" />
      <path d="M470 560 490 584 520 600 545 584 560 560 580 548 600 550 588 580 582 600 570 620 572 650 565 680 590 704 620 715 650 710 680 700 700 690 720 680M600 550 616 520 640 480M600 550 620 560 640 560 634 580 640 590 632 616 620 640 622 666 630 690M640 560 670 540 720 530 726 560 690 580 690 600 720 640 690 660 690 680M720 530 740 500" />
      <path d="M420 744 460 746 520 760 540 748 560 740 580 764 620 790 660 784 700 790 730 770 768 772M520 760 540 786 570 800 566 816 550 830 524 828 500 820 486 836 480 860 458 866 440 880 444 890 420 905 400 900 390 880 370 870 360 850 325 845M550 830 566 852 560 880 558 910 540 930 510 928 480 935 462 930 470 912 450 900 430 880M480 935 500 970 470 978" />
      <path d="M540 930 560 938 590 926 610 930 620 910 640 900 642 870 625 840 606 826 570 810M640 900 666 890 690 870 688 850 700 820 700 800 690 780M690 870 716 862 726 840 740 830 756 816 768 790M610 930 604 950 610 960 590 986 560 990 540 1010M640 900 660 930 690 950 700 940 720 952 740 950M726 840 760 880 800 880" />
    </g>
  </svg>
);

const DesignCanvas = () => (
  <CanvasRow>
    <Canvas>
      <Block $x={0} $y={27} $h={40}>
        <Sheet
          cols="25px 107px 256px 108px 108px 108px minmax(52px, 1fr)" rows="20px 60px"
          heads={[['D'], ['E', true], ['F', false, true], ['G', false, true], ['H', false, true], ['', false, true]]}
          body={[{ n: '', hot: true, cells: <><Cell /><Cell $sel $pad={2}><Formula>=year()+"年"+month()+"</Formula></Cell><Cell /><Cell /><Cell /><Cell /></> }]}
        />
      </Block>
      <Block $x={0} $y={63} $w={148} $h={140}><RingSheet title="车险" /></Block>
      <Block $x={148} $y={63} $w={136} $h={140}><RingSheet title="非车险" /></Block>
      <Block $x={284} $y={63} $w={288}>
        <Sheet
          cols="25px 22px 34px 95px 22px 34px 94px" rows="20px 19px 30px 33px 33px"
          heads={[['A'], ['B'], ['C'], ['D'], ['E'], ['F', true]]}
          body={[
            { n: '1', cells: <Cell $span={6} $pad={10}><CellTitle $size={13} $lh={17}>当日统计</CellTitle></Cell> },
            {
              n: '2', cells: <>
                <Cell />
                <Cell $pad={4}>
                  <svg width="28" height="28" viewBox="0 0 28 28" fill="none" stroke="#4c92e4" strokeWidth="1.300">
                    <path d="M8 4h12q2 0 2 2l2 7q2 2 2 4v6H2v-6q0-2 2-4l2-7q0-2 2-2zM8 7.500h12l1 5H7zM4 23v3h4v-3M20 23v3h4v-3M1 11.500h3M24 11.500h3M10 20.500h8" />
                    <circle cx="7" cy="18" r="1.500" /><circle cx="21" cy="18" r="1.500" />
                  </svg>
                </Cell>
                <Cell $pad={2} $line={NAVY} $thick><Caption $lh={30}>车险数量</Caption></Cell>
                <Cell />
                <Cell $pad={6}>
                  <svg width="27" height="28" viewBox="0 0 27 28" fill="none" stroke="#1a96e3" strokeWidth="1.300">
                    <path d="M12 25C4 22 1 18 1 13V5c4 0 7-1 10-3 3 2 6 3 10 3v7" />
                    <text x="11" y="17" fontSize="11" fill="#1a96e3" stroke="none" textAnchor="middle" fontFamily="Noto Sans CJK SC">保</text>
                    <circle cx="19.500" cy="20" r="6" /><path d="M19.500 17l2 2.500-2 3.500-2-3.500z" fill="#1a96e3" />
                  </svg>
                </Cell>
                <Cell $pad={11}><Caption $lh={30}>非车险数量</Caption></Cell>
              </>,
            },
            { n: '3', cells: <><Cell /><Cell $span={2} $pad={4} $line={NAVY} $thick><Figure>186,000</Figure></Cell><Cell /><Cell $span={2} $pad={12}><Figure>65,000</Figure></Cell></> },
            { n: '4', cells: <><Cell /><Cell $span={2} $pad={4} $line={NAVY} $thick><Caption $lh={18}>保费（元）</Caption></Cell><Cell /><Cell $span={2} $pad={12}><Caption $lh={18}>保费（元）</Caption></Cell></> },
          ]}
        />
      </Block>
      <Block $x={572} $y={63} $h={140}>
        <Sheet
          cols="48px calc(100% - 44px)" rows="21px 28px 92px"
          heads={[['', true]]}
          body={[
            { n: '1', cells: <Cell $pad={17}><CellTitle $size={20} $lh={26}>SOP项目组</CellTitle></Cell> },
            { n: '', hot: true, cells: <Cell $sel><OrangeBar /></Cell> },
          ]}
        />
      </Block>
      <Block $x={0} $y={203} $w={284} $h={150}>
        <Sheet
          cols="25px 136px 136px" rows="20px 26px 150px"
          heads={[['A'], ['B']]}
          body={[
            { n: '1', cells: <><Cell $pad={8}><CellTitle $size={13} $lh={24}>SVM事业部</CellTitle></Cell><Cell /></> },
            { n: '2', hot: true, cells: <><Cell><Donut w={135} h={119} cx={68} cy={75} outer={52} inner={36} colors={vivid} /></Cell><Cell><Donut w={135} h={119} cx={68} cy={75} outer={52} inner={36} colors={vivid} /></Cell></> },
          ]}
        />
      </Block>
      <Block $x={0} $y={353} $w={284}>
        <Sheet cols="25px 143px 106px 60px" rows="20px 20px" heads={[['A'], ['B'], ['', true]]} body={[{ n: '', cells: <><Cell /><Cell /><Cell /></> }]} />
      </Block>
      <Block $x={572} $y={203} $h={126}>
        <Sheet
          tint
          cols="24px calc(100% - 20px)" rows="19px 25px 82px"
          heads={[['', true]]}
          body={[
            { n: '1', hot: true, cells: <Cell $pad={6} $sel $fill="#eaf7fe"><CellTitle $size={17} $lh={18}>SVP销售指标</CellTitle></Cell> },
            { n: '', cells: <Cell $fill="#daf3ff"><svg width="100%" height="82" preserveAspectRatio="xMinYMin slice" viewBox="0 0 166 82"><path d="M25 19H2000V82H87z" fill="#2450c4" /></svg></Cell> },
          ]}
        />
        <Veil />
      </Block>
      <Block $x={572} $y={329}>
        <Sheet
          cols="25px 11px 75px 76px 60px" rows="20px 19px 20px"
          heads={[['A', true], ['B'], ['C'], ['']]}
          body={[
            { n: '1', hot: true, cells: <><Cell $sel /><Cell $span={2} $pad={2}><CellTitle $size={13} $lh={17}>SVM事业部</CellTitle></Cell><Cell /></> },
            { n: '', cells: <><Cell /><Cell /><Cell /><Cell /></> },
          ]}
        />
      </Block>
      <MapFrame><ChinaMap /></MapFrame>
      <Handle $x={425} $y={170} />
      <Handle $x={279} $y={300} />
      <Handle $x={572} $y={300} />
      <EditButton type="button">
        <Icon w={14} size={14} stroke="#fff"><path d="M8 1.500H1.500v11h11V6M5 10 12 1" strokeWidth="1.400" /></Icon>
        编辑
      </EditButton>
    </Canvas>
    <CanvasScroll><ScrollEnd type="button" aria-label="画布上滚"><Icon w={10} size={7} stroke="#b5b5b5"><path d="M1 5.500 5 1.500 9 5.500" strokeWidth="2" /></Icon></ScrollEnd></CanvasScroll>
  </CanvasRow>
);

/* ---------- right panel ---------- */

const Rail = styled.div`
  display: flex;
  flex-direction: column;
  align-items: center;
  flex: none;
  width: 40px;
  padding-top: 6px;
  background: #e7e7e8;
`;

const RailTab = styled.button<{ $on?: boolean }>`
  display: grid;
  place-items: center;
  width: 32px;
  height: 28px;
  padding: 0;
  margin: ${p => (p.$on ? '13px 0 4px' : '0')};
  border: 0;
  background: ${p => (p.$on ? '#f5f5f7' : 'none')};
`;

const RightPanel = styled.aside`
  flex: none;
  width: 212px;
  overflow: hidden;
`;

const PanelTitle = styled.h2`
  height: 27px;
  padding: 4px 9px;
  border-bottom: 1px solid #d9d9dc;
`;

const PanelTools = styled.div`
  margin-left: 10px;
  border-bottom: 1px solid #d9d9dc;
`;

const Widgets = styled.ul`
  height: 170px;
  margin: 2px 0 20px 42px;
  overflow: hidden;
  border-left: 1px solid #eaeaec;
`;

const WidgetRow = styled.li`
  display: flex;
  align-items: center;
  gap: 3px;
  height: 18px;
  padding-left: 12px;
`;

const Form = styled.form`
  padding: 10px 0 0;
`;

const Field = styled.div<{ $pad: number; $h: number; $label: number }>`
  display: grid;
  grid-template-columns: ${p => p.$label}px 1fr;
  align-items: center;
  height: ${p => p.$h}px;
  padding-left: ${p => p.$pad}px;
  white-space: nowrap;
`;

const FieldBody = styled.div`
  display: flex;
  height: 20px;
`;

const TextInput = styled.input`
  width: 115px;
  height: 20px;
  padding: 0 5px;
  border: 1px solid #d0d1d5;
  border-right-width: 2px;
  border-radius: 0;
  background: #fff;
`;

const Picker = styled.div`
  display: flex;
  align-items: center;
  width: 97px;
  height: 20px;
  border: 1px solid #d0d1d5;
  background: #fff;
`;

const Select = styled.select<{ $pad: number }>`
  flex: 1;
  min-width: 0;
  height: 18px;
  padding: 0 0 0 ${p => p.$pad}px;
  border: 0;
  border-radius: 0;
  appearance: none;
  background: none;
`;

const PickArrow = styled.span`
  display: grid;
  place-items: center;
  width: 19px;
  height: 18px;
  background: #dcdde1;
  pointer-events: none;
`;

const Extra = styled.span`
  width: 10px;
  margin-left: 3px;
  border: 1px solid #d0d1d5;
  background: #fff;
`;

const Rule = styled.hr`
  height: 2px;
  margin: 3px 0 16px 4px;
  border: 0;
  background: #e9e7dc;
`;

const Toggle = styled.button<{ $on?: boolean }>`
  flex: none;
  width: ${p => (p.$on ? 56 : 60)}px;
  height: 20px;
  padding: 0;
  border: 1px solid ${p => (p.$on ? BLUE : '#d0d1d5')};
  background: ${p => (p.$on ? BLUE : '#fff')};
  color: ${p => (p.$on ? '#fff' : '#000')};
`;

const SeriesTable = styled.table`
  width: 212px;
  margin: 6px 0 2px 22px;
  border-collapse: collapse;
  table-layout: fixed;
  white-space: nowrap;
  th, td { padding: 0; font-weight: 400; text-align: left; overflow: visible; line-height: 19px; }
  th { height: 21px; padding-left: 11px; }
  th:last-child { padding-left: 5px; }
  td { height: 20px; padding-left: 8px; background: ${BLUE}; line-height: 17px; }
`;

const AddRow = styled.button`
  display: grid;
  place-items: center;
  width: 206px;
  height: 20px;
  margin-left: 21px;
  padding: 0;
  border: 1px dashed #9a9a9a;
  background: #fff;
`;

const widgets = ['chart0', 'report4', 'report1_c', 'report9', 'report7', 'report6', 'report5', 'report3', 'report2', 'report1'];

const RightSide = () => (
  <>
    <Rail>
      <Icon w={6} size={10} stroke="none"><path d="M0 0l6 5-6 5z" fill="#a5a5a8" /></Icon>
      <RailTab type="button" $on aria-label="组件"><Icon size={12} stroke="none"><rect width="16" height="12" rx="1" fill={BLUE} /><path d="M8 4h5l-2.500 4z" fill="#fff" /></Icon></RailTab>
      <RailTab type="button" aria-label="组件库"><Icon size={14} stroke="#5c5f6a"><path d="M1 1h14v4H1zM1 8h7v5H1zM11 8h4v5h-4z" strokeWidth="2" /></Icon></RailTab>
    </Rail>
    <RightPanel>
      <PanelTitle>组件设置</PanelTitle>
      <PanelTools>
        <Toolbar $h={25} $gap={10} $pad={7}>
          <Tool label="剪切">{cutArt}</Tool>
          <Tool label="复制">{copyArt}</Tool>
          <Tool label="粘贴">{pasteArt}</Tool>
          <Tool label="删除">{removeArt}</Tool>
          <Toolbar $h={16} $gap={6} $pad={0}>
            <Divider /><Tool label="置顶"><path d="M3 1.500h10M8 15V5M4.500 8.500 8 4.500l3.500 4" stroke="#8a8a8d" strokeWidth="1.800" /></Tool>
          </Toolbar>
          <Tool label="置底"><path d="M3 14.500h10M8 1v10M4.500 7.500 8 11.500l3.500-4" stroke="#8a8a8d" strokeWidth="1.800" /></Tool>
          <Tool label="上移"><path d="M8 15V3M4 7l4-4.500L12 7" stroke="#8a8a8d" strokeWidth="1.800" /></Tool>
          <Tool label="下移"><path d="M8 1v11M4 8.500l4 4.500 4-4.500" stroke="#8a8a8d" strokeWidth="1.800" /></Tool>
        </Toolbar>
      </PanelTools>
      <Widgets>
        {widgets.map((w, i) => (
          <WidgetRow key={w}>
            {i === 0
              ? <Icon stroke="none"><path d="M0 6h4v10H0z" fill="#a5c33c" /><path d="M4 0h4v16H4z" fill="#e13b3b" /><path d="M8 4h5v12H8z" fill="#1476b8" /><path d="M6 16l1-5 6-6 3 3-6 6z" fill="#f7b851" /><path d="M12 6l2-2 2 2-2 2z" fill="#e8604c" /></Icon>
              : <Icon stroke="#4a74ad" size={12}><rect x=".5" y="1.500" width="15" height="9" fill="#fff" /></Icon>}
            <Label $on={i === 0}><Ascii>{w}</Ascii></Label>
          </WidgetRow>
        ))}
      </Widgets>
      <Tabs role="tablist">
        <Tab type="button" role="tab" $w={62}>类型</Tab>
        <Tab type="button" role="tab" $w={61} $on>数据</Tab>
        <Tab type="button" role="tab" $w={61}>样式</Tab>
        <Tab type="button" role="tab" $w={61}>特效</Tab>
      </Tabs>
      <Form>
        <Field $pad={9} $h={20} $label={85}><label htmlFor="source">数据来源</label><FieldBody><TextInput id="source" defaultValue="数据集数据" /></FieldBody></Field>
        <Field $pad={20} $h={31} $label={86}>
          <label htmlFor="dataset">数据集</label>
          <FieldBody>
            <Picker><Icon>{databaseArt}</Icon><Select id="dataset" $pad={4}><option>地图</option></Select><PickArrow><Icon w={10} size={7}>{chevronArt}</Icon></PickArrow></Picker>
            <Extra />
          </FieldBody>
        </Field>
        <Field $pad={20} $h={20} $label={86}>
          <label htmlFor="area">区域名</label>
          <FieldBody>
            <Picker><Select id="area" $pad={6}><option>省份</option></Select><PickArrow><Icon w={10} size={7}>{chevronArt}</Icon></PickArrow></Picker>
            <Extra />
          </FieldBody>
        </Field>
        <Rule />
        <Field $pad={20} $h={20} $label={86}><span>系列名使用</span><FieldBody><Toggle type="button">字段值</Toggle><Toggle type="button" $on>字段名</Toggle></FieldBody></Field>
        <SeriesTable>
          <colgroup><col width="63" /><col width="63" /><col width="86" /></colgroup>
          <thead><tr><th>字段名</th><th>系列名</th><th>汇总方式</th></tr></thead>
          <tbody><tr><td>销售额</td><td>保费</td><td>最后一个</td></tr></tbody>
        </SeriesTable>
        <AddRow type="button" aria-label="添加字段"><Icon w={12} size={12}><path d="M6 0v12M0 6h12" strokeWidth="2" /></Icon></AddRow>
      </Form>
    </RightPanel>
  </>
);

const Markup = styled.svg`
  position: absolute;
  right: 58px;
  top: 240px;
  pointer-events: none;
`;

/* ---------- desktop strip and taskbar ---------- */

const DeskRow = styled.div`
  display: flex;
  flex: none;
  height: 77px;
  overflow: hidden;
`;

const Shortcuts = styled.div`
  display: flex;
  flex: none;
  width: 187px;
  overflow: hidden;
  color: #fff;
  line-height: 18px;
  text-align: center;
  text-shadow: 0 1px 2px #000;
  font-family: "Open Sans", ${CJK};
`;

const Shortcut = styled.div<{ $w: number }>`
  flex: 0 0 ${p => p.$w}px;
  margin-left: -8px;
  white-space: nowrap;
`;

const BackWindow = styled.div`
  display: flex;
  flex: 1;
  background: linear-gradient(#c4c4c4, #f0f0f0 10px, #fff 22px);
`;

const BackScroll = styled.div`
  width: 17px;
  margin-left: auto;
  border: solid #efefef;
  border-width: 0 2px;
  background: #bfbfbf;
`;

const DeskGap = styled.div`
  flex: 0 0 118px;
`;

const Taskbar = styled.footer`
  display: flex;
  align-items: stretch;
  flex: none;
  height: 40px;
  background: linear-gradient(90deg, #1f394d 0, #2a4558 12%, #44596a 40%, #44596a 80%, #27465a 92%, #1c3c54 100%);
  color: #fff;
`;

const TaskIcon = styled.button`
  display: grid;
  place-items: center;
  width: 48px;
  padding: 0;
  border: 0;
  background: none;
`;

const TaskIcons = styled.div`
  display: flex;
  width: 140px;
  & > :first-child { width: 40px; padding-right: 8px; }
`;

const TaskApp = styled.button<{ $on?: boolean; $stack?: boolean }>`
  display: grid;
  place-items: center;
  width: ${p => (p.$stack ? 51 : 58)}px;
  height: 38px;
  margin: 1px ${p => (p.$stack ? 10 : 3)}px 0 0;
  padding: 0;
  border: 1px solid ${p => (p.$on ? '#e3e8eb' : '#81919d')};
  background: ${p => (p.$on ? '#8996a1' : '#5b7080')};
  ${p => p.$stack && css`box-shadow: 4px 0 0 -1px #5b7080, 5px 0 0 -1px #81919d, 8px 0 0 -1px #5b7080, 9px 0 0 -1px #81919d;`}
`;

const Badge = styled.span<{ $s: number }>`
  display: grid;
  place-items: center;
  width: ${p => p.$s}px;
  height: ${p => p.$s}px;
  border-radius: ${p => (p.$s > 20 ? 6 : 3)}px;
  background: #0090ff;
  color: #fff;
  font: 900 ${p => (p.$s > 20 ? 20 : 11)}px/1 Inter, sans-serif;
`;

const Tray = styled.div`
  display: flex;
  align-items: center;
  gap: 8px;
  margin-left: auto;
  padding-right: 30px;
  & > :first-child { margin-right: 5px; }
`;

const Clock = styled.time`
  width: 70px;
  margin-right: 4px;
  font: 12px/19px "Open Sans", sans-serif;
  text-align: center;
`;

const Bottom = () => (
  <>
    <DeskRow>
      <Shortcuts>
        <Shortcut $w={72}>奥德SSLVPN<br />系统</Shortcut>
        <Shortcut $w={96}>照片</Shortcut>
        <Shortcut $w={56}>交接文件</Shortcut>
      </Shortcuts>
      <BackWindow><BackScroll /></BackWindow>
      <DeskGap />
    </DeskRow>
    <Taskbar>
      <TaskIcons>
        <TaskIcon type="button" aria-label="开始"><svg width="25" height="24" viewBox="0 0 25 24" fill="#fff"><path d="M0 3.500 11 2v9.500H0zM12 2l13-2v11.500H12zM0 12.500h11V22L0 20.500zM12 12.500h13V24l-13-2z" /></svg></TaskIcon>
        <TaskIcon type="button" aria-label="搜索"><svg width="17" height="17" viewBox="0 0 17 17" fill="none" stroke="#fff" strokeWidth="1.400"><circle cx="10.500" cy="6.500" r="5.500" /><path d="M6.500 10.500.5 16.500" /></svg></TaskIcon>
        <TaskIcon type="button" aria-label="任务视图"><svg width="17" height="16" viewBox="0 0 17 16" fill="none" stroke="#fff"><path d="M.5 0v2.500h11V0M.5 5.500h11v5H.5zM.5 16v-2.500h11V16M15.500 0v3M15.500 8v8" /><path d="M14 4h3v3h-3z" fill="#fff" stroke="none" /></svg></TaskIcon>
      </TaskIcons>
      <TaskApp type="button" aria-label="会议"><Badge $s={32}>M</Badge></TaskApp>
      <TaskApp type="button" $stack aria-label="浏览器">
        <svg width="30" height="30" viewBox="0 0 30 30">
          <circle cx="15" cy="15" r="15" fill="#fbc826" />
          <path d="M2 7.500A15 15 0 0 0 14 30L21 18.500 15 15 8.500 18.500z" fill="#34a350" />
          <path d="M2 7.500 8.500 18 15 8h13A15 15 0 0 0 2 7.500z" fill="#e23f32" />
          <circle cx="15" cy="15" r="6.800" fill="#fff" /><circle cx="15" cy="15" r="5.400" fill="#4285f4" />
        </svg>
      </TaskApp>
      <TaskApp type="button" aria-label="文字处理">
        <svg width="32" height="28" viewBox="0 0 32 28">
          <path d="M8 0h24v7H8z" fill="#41a5ee" /><path d="M8 7h24v7H8z" fill="#2b7cd3" /><path d="M8 14h24v7H8z" fill="#185abd" /><path d="M8 21h24v7H8z" fill="#103f91" />
          <rect y="6" width="16" height="16" rx="1" fill="#185abd" />
          <text x="8" y="19" fill="#fff" fontSize="13" fontWeight="700" fontFamily="Open Sans" textAnchor="middle">W</text>
        </svg>
      </TaskApp>
      <TaskApp type="button" aria-label="文本编辑器">
        <svg width="30" height="32" viewBox="0 0 30 32">
          <defs><linearGradient id="pad" x2="0" y2="1"><stop offset="0.300" stopColor="#fff" /><stop offset="1" stopColor="#7fd11b" /></linearGradient></defs>
          <path d="M1 2h17l6 6v23H1z" fill="url(#pad)" stroke="#333" />
          <path d="M3 2v2M6 2v2M9 2v2M12 2v2M15 2v2" stroke="#777" />
          <text x="4" y="19" fontSize="9" fontWeight="700" fontFamily="Liberation Sans" fill="#222">n++</text>
          <path d="M17 26l1-5L27 2l3 2-9 18z" fill="#f0b52c" stroke="#8a6414" strokeWidth=".6" /><path d="M27 2l1-2 2 1v3z" fill="#c2332b" />
        </svg>
      </TaskApp>
      <TaskApp type="button" $on aria-label="远程桌面">
        <svg width="32" height="30" viewBox="0 0 32 30">
          <path d="M11 19l6 1v5l6 2-8 3-9-3 5-2z" fill="#cfd3d6" />
          <path d="M2 0l24 3-2 18L5 18z" fill="#d6dade" /><path d="M4 2l20 3-2 14L6 16z" fill="#0f35c9" /><path d="M4 2l14 2L8 16H6z" fill="#4f87f5" />
          <circle cx="23" cy="23" r="7" fill="#ececec" stroke="#999" /><path d="M19 22l3 2-2 4M27 24l-3-2 2-4" fill="none" stroke="#2e9c3b" strokeWidth="2" />
        </svg>
      </TaskApp>
      <TaskApp type="button" aria-label="微信">
        <svg width="34" height="28" viewBox="0 0 34 28">
          <ellipse cx="13" cy="11" rx="12" ry="10.500" fill="#2fd66b" /><path d="M5 18l-1 6 6-3z" fill="#2fd66b" />
          <ellipse cx="24" cy="18" rx="9.500" ry="8.500" fill="#ececec" /><path d="M28 24l3 4v-6z" fill="#ececec" />
          <g fill="#1a7f40"><circle cx="9" cy="8" r="1.500" /><circle cx="17" cy="8" r="1.500" /></g>
          <g fill="#8a8a8a"><circle cx="21" cy="16" r="1.200" /><circle cx="27" cy="16" r="1.200" /></g>
        </svg>
      </TaskApp>
      <Tray>
        <Icon w={8} size={4} stroke="none"><path d="M0 4l4-4 4 4z" fill="#fff" /></Icon>
        <Badge $s={16}>M</Badge>
        <svg width="16" height="17" viewBox="0 0 16 17">
          <ellipse cx="8" cy="10" rx="6" ry="6" fill="#111" /><circle cx="8" cy="5" r="4.800" fill="#111" /><ellipse cx="7" cy="12" rx="3.500" ry="4" fill="#fff" />
          <circle cx="6.500" cy="4" r="1.300" fill="#fff" /><circle cx="9.500" cy="4" r="1.300" fill="#fff" /><path d="M5 6h6l-3 2z" fill="#f9a61a" /><path d="M2 8h12v2L8 11 2 10z" fill="#e62b2b" />
          <circle cx="12" cy="12.500" r="4" fill="#f99c43" /><path d="M10 11.500h4M10 13.500h4" stroke="#fff" />
        </svg>
        <svg width="16" height="14" viewBox="0 0 16 14" fill="none" stroke="#b9c3ca"><path d="M3 13A11 11 0 0 1 14 2M6 13a8 8 0 0 1 8-8M9 13a5 5 0 0 1 5-5M1 12A13 13 0 0 1 12 0" /><circle cx="12.500" cy="12" r="1.500" fill="#fff" stroke="none" /></svg>
        <Icon w={16} size={14} stroke="#fff"><path d="M1 4.500h2.500L7 1v12L3.500 9.500H1zM10 5l4.500 4.500M14.500 5 10 9.500" /></Icon>
        <Clock>15:46<br />2021/7/12</Clock>
        <svg width="17" height="17" viewBox="0 0 17 17" fill="none" stroke="#fff" strokeWidth="1.200"><path d="M1 1h15v12h-4.500L9 15.500 6.500 13H1z" /></svg>
      </Tray>
    </Taskbar>
  </>
);

/* ---------- app ---------- */

export default function App() {
  return (
    <Desktop>
      <GlobalStyle />
      <RemoteWindow>
        <Designer>
          <TitleBar>
            <svg width="17" height="17" viewBox="0 0 17 17"><path d="M1 3l4-2v15H1z" fill="#0f5fa8" /><path d="M5 1h12v3l-7 4H5z" fill="#26a5e8" /><path d="M11 5l5-2v13h-5z" fill="#1b93da" /><path d="M4 9h4v7H4z" fill="#3cb8f0" /></svg>
            <Title>
              <span><Mixed ui text="FineReport 10.0 stable 2021-04-11 @默认工作目录[本地目录]" /></span>
              <span><Mixed ui text="D:\zhang_name\FineReport_10.0\webapps\webroot\WEB-INF\reportlets/demo/analytics/保险数据大屏.frm" /></span>
            </Title>
            <WindowButtons>
              <IconButton type="button" aria-label="最小化"><Icon stroke="#000"><path d="M3 8.500h10" /></Icon></IconButton>
              <IconButton type="button" aria-label="还原"><Icon stroke="#000"><path d="M3.500 5.500h7v7h-7zM5.500 5V3.500h7v7H11" /></Icon></IconButton>
            </WindowButtons>
          </TitleBar>
          <MenuBar>
            {['文件', '模板', '服务器', '帮助', '社区'].map(m => <MenuItem key={m} type="button">{m}</MenuItem>)}
            <LogLine>
              <Mixed text="日志 | 严重:03:31:39 QuartzScheduler_Worker-54 ERROR [standard] com.fr.plugin.customsubmmit.repor... " />
              <IconButton type="button" aria-label="搜索"><Icon><circle cx="7" cy="7" r="5.500" strokeWidth="1.500" /><path d="M11 11l4.500 4.500" strokeWidth="2" /></Icon></IconButton>
              <Login type="button">未登录</Login>
            </LogLine>
          </MenuBar>
          <Workspace>
            <LeftSide />
            <Gutter>
              <Icon w={6} size={10} stroke="none"><path d="M6 0 0 5l6 5z" fill="#a5a5a8" /></Icon>
              <GripBars />
            </Gutter>
            <Center>
              <EditorHead />
              <DesignCanvas />
            </Center>
            <RightSide />
          </Workspace>
        </Designer>
        <ScrollColumn>
          <ScrollEnd type="button" aria-label="上滚"><Icon w={10} size={7} stroke="#555"><path d="M1 5.500 5 1.500 9 5.500" strokeWidth="2" /></Icon></ScrollEnd>
          <Thumb $grow={348} /><Rest $grow={152} />
          <ScrollEnd type="button" aria-label="下滚"><Icon w={10} size={7} stroke="#555"><path d="M1 1.500 5 5.500 9 1.500" strokeWidth="2" /></Icon></ScrollEnd>
        </ScrollColumn>
        <ScrollRow>
          <ScrollEnd type="button" aria-label="左滚"><Icon w={7} size={10} stroke="#555"><path d="M5.500 1 1.500 5l4 4" strokeWidth="2" /></Icon></ScrollEnd>
          <Thumb $grow={1264} /><Rest $grow={33} />
          <ScrollEnd type="button" aria-label="右滚"><Icon w={7} size={10} stroke="#555"><path d="M1.500 1l4 4-4 4" strokeWidth="2" /></Icon></ScrollEnd>
          <Icon w={17} size={15} stroke="none"><path d="M11 6h2v2h-2zM8 9h2v2H8zM11 9h2v2h-2zM5 12h2v2H5zM8 12h2v2H8zM11 12h2v2h-2z" fill="#b5b5b5" /></Icon>
        </ScrollRow>
        <Markup width="200" height="236" viewBox="1090 240 200 236">
          <g fill="#ff1e14">
            <path d="M1096 243 1098 243 1148 427 1154 424 1150 445 1137 432 1143 431 1096 244z" />
            <path d="M1224 274 1226 274 1246 432 1251 432 1244 446 1233 433 1238 432z" />
          </g>
          <g fill="none" stroke="#ff1e14" strokeWidth="3">
            <rect x="1149.500" y="446.500" width="43" height="20" rx="1" />
            <rect x="1208.500" y="438.500" width="64" height="32" rx="1" />
          </g>
        </Markup>
      </RemoteWindow>
      <Bottom />
    </Desktop>
  );
}
